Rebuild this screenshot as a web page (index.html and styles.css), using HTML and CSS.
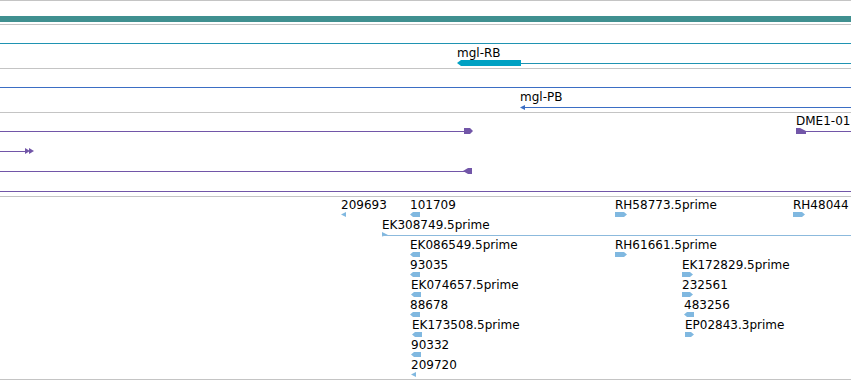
FILE: index.html
```html
<!DOCTYPE html>
<html lang="en">
<head>
<meta charset="UTF-8">
<title>Genome view</title>
<link rel="stylesheet" href="styles.css">
</head>
<body>
  <div class="browser">
    <!-- overview strip -->
    <div class="overview">
      <div class="overview-bar"></div>
    </div>

    <!-- transcripts -->
    <div class="track transcripts">
      <div class="row">
        <div class="feat bare" style="left:0px">
          <svg class="glyph" width="851" height="6"><rect x="0" y="3" width="851" height="1"/></svg>
        </div>
      </div>
      <div class="row">
        <div class="feat" style="left:457px">
          <span class="label">mgl-RB</span>
          <svg class="glyph" width="394" height="6">
            <polygon class="thick" points="0,3 4,0 64,0 64,6 4,6"/>
            <rect x="64" y="3" width="330" height="1"/>
          </svg>
        </div>
      </div>
    </div>

    <!-- proteins -->
    <div class="track proteins">
      <div class="row">
        <div class="feat bare" style="left:0px">
          <svg class="glyph" width="851" height="6"><rect x="0" y="3" width="851" height="1"/></svg>
        </div>
      </div>
      <div class="row">
        <div class="feat" style="left:520px">
          <span class="label">mgl-PB</span>
          <svg class="glyph" width="331" height="6">
            <polygon points="0,3.5 5,1 5,6"/>
            <rect x="4" y="3" width="327" height="1"/>
          </svg>
        </div>
      </div>
    </div>

    <!-- matches -->
    <div class="track matches">
      <div class="row">
        <div class="feat bare" style="left:0px">
          <svg class="glyph" width="473" height="6">
            <rect x="0" y="3" width="465" height="1"/>
            <polygon points="464,0 470,0 473,3 470,6 464,6"/>
          </svg>
        </div>
        <div class="feat" style="left:796px">
          <span class="label">DME1-01</span>
          <svg class="glyph" width="55" height="6">
            <polygon points="0,0 4,0 10,3 10,6 0,6"/>
            <rect x="9" y="3" width="46" height="1"/>
          </svg>
        </div>
      </div>
      <div class="row">
        <div class="feat bare" style="left:0px">
          <svg class="glyph" width="34" height="6">
            <rect x="0" y="3" width="26" height="1"/>
            <polygon points="25,0 30,3 25,6"/>
            <polygon points="29,0 34,3 29,6"/>
          </svg>
        </div>
      </div>
      <div class="row">
        <div class="feat bare" style="left:0px">
          <svg class="glyph" width="472" height="6">
            <rect x="0" y="3" width="465" height="1"/>
            <polygon points="463,3 468,0 472,0 472,6 468,6"/>
          </svg>
        </div>
      </div>
      <div class="row">
        <div class="feat bare" style="left:0px">
          <svg class="glyph" width="851" height="6"><rect x="0" y="3" width="851" height="1"/></svg>
        </div>
      </div>
    </div>

    <!-- ESTs -->
    <div class="track ests">
      <div class="row">
        <div class="feat" style="left:341px">
          <span class="label">209693</span>
          <svg class="glyph" width="6" height="6"><polygon points="0,2.5 5,0 5,5"/></svg>
        </div>
        <div class="feat" style="left:410px">
          <span class="label">101709</span>
          <svg class="glyph" width="10" height="6"><polygon points="0,2.5 3,0 10,0 10,5 3,5"/></svg>
        </div>
        <div class="feat" style="left:615px">
          <span class="label">RH58773.5prime</span>
          <svg class="glyph" width="12" height="6"><polygon points="0,0 9,0 12,2.5 9,5 0,5"/></svg>
        </div>
        <div class="feat" style="left:793px">
          <span class="label">RH48044</span>
          <svg class="glyph" width="12" height="6"><polygon points="0,0 9,0 12,2.5 9,5 0,5"/></svg>
        </div>
      </div>
      <div class="row">
        <div class="feat" style="left:382px">
          <span class="label">EK308749.5prime</span>
          <svg class="glyph" width="469" height="6">
            <polygon points="0,0 6,3 0,4.5"/>
            <rect class="thin" x="0" y="3" width="469" height="1"/>
          </svg>
        </div>
      </div>
      <div class="row">
        <div class="feat" style="left:410px">
          <span class="label">EK086549.5prime</span>
          <svg class="glyph" width="10" height="6"><polygon points="0,2.5 3,0 10,0 10,5 3,5"/></svg>
        </div>
        <div class="feat" style="left:615px">
          <span class="label">RH61661.5prime</span>
          <svg class="glyph" width="12" height="6"><polygon points="0,0 9,0 12,2.5 9,5 0,5"/></svg>
        </div>
      </div>
      <div class="row">
        <div class="feat" style="left:410px">
          <span class="label">93035</span>
          <svg class="glyph" width="10" height="6"><polygon points="0,2.5 3,0 10,0 10,5 3,5"/></svg>
        </div>
        <div class="feat" style="left:682px">
          <span class="label">EK172829.5prime</span>
          <svg class="glyph" width="11" height="6"><polygon points="0,0 8,0 11,2.5 8,5 0,5"/></svg>
        </div>
      </div>
      <div class="row">
        <div class="feat" style="left:411px">
          <span class="label">EK074657.5prime</span>
          <svg class="glyph" width="10" height="6"><polygon points="0,2.5 3,0 10,0 10,5 3,5"/></svg>
        </div>
        <div class="feat" style="left:682px">
          <span class="label">232561</span>
          <svg class="glyph" width="11" height="6"><polygon points="0,0 8,0 11,2.5 8,5 0,5"/></svg>
        </div>
      </div>
      <div class="row">
        <div class="feat" style="left:410px">
          <span class="label">88678</span>
          <svg class="glyph" width="10" height="6"><polygon points="0,2.5 3,0 10,0 10,5 3,5"/></svg>
        </div>
        <div class="feat" style="left:684px">
          <span class="label">483256</span>
          <svg class="glyph" width="10" height="6"><polygon points="0,2.5 3,0 10,0 10,5 3,5"/></svg>
        </div>
      </div>
      <div class="row">
        <div class="feat" style="left:412px">
          <span class="label">EK173508.5prime</span>
          <svg class="glyph" width="10" height="6"><polygon points="0,2.5 3,0 10,0 10,5 3,5"/></svg>
        </div>
        <div class="feat" style="left:685px">
          <span class="label">EP02843.3prime</span>
          <svg class="glyph" width="9" height="6"><polygon points="0,0 6,0 9,2.5 6,5 0,5"/></svg>
        </div>
      </div>
      <div class="row">
        <div class="feat" style="left:411px">
          <span class="label">90332</span>
          <svg class="glyph" width="10" height="6"><polygon points="0,2.5 3,0 10,0 10,5 3,5"/></svg>
        </div>
      </div>
      <div class="row">
        <div class="feat" style="left:411px">
          <span class="label">209720</span>
          <svg class="glyph" width="6" height="6"><polygon points="0,2.5 5,0 5,5"/></svg>
        </div>
      </div>
    </div>
  </div>
</body>
</html>
```

FILE: styles.css
```css
body {
  margin: 0;
  padding: 0;
  background: #fff;
  color: #000;
  font-family: "DejaVu Sans", sans-serif;
  font-size: 12px;
}
.browser {
  width: 851px;
  overflow: hidden;
}
.overview {
  border-top: 1px solid #c4c4c4;
  border-bottom: 1px solid #c4c4c4;
  padding: 15px 0 2px;
}
.overview-bar {
  height: 6px;
  background-color: #409090;
}
.track {
  padding: 2px 0 1px;
  border-bottom: 1px solid #c4c4c4;
  overflow: hidden;
}
.track.ests {
  padding-bottom: 0;
}
.row {
  position: relative;
  height: 20px;
}
.feat {
  position: absolute;
  top: 0;
}
.feat.bare {
  padding-top: 13px;
}
.label {
  display: block;
  height: 13px;
  line-height: 13px;
  white-space: nowrap;
}
.glyph {
  display: block;
}

/* track colours */
.transcripts .glyph { fill: #1f93b2; }
.transcripts .glyph .thick { fill: #00a1c3; }
.proteins .glyph { fill: #3b6ec4; }
.matches .glyph { fill: #7256a8; }
.ests .glyph { fill: #80b8e0; }
.ests .glyph .thin { fill: #8cbadd; }
```
